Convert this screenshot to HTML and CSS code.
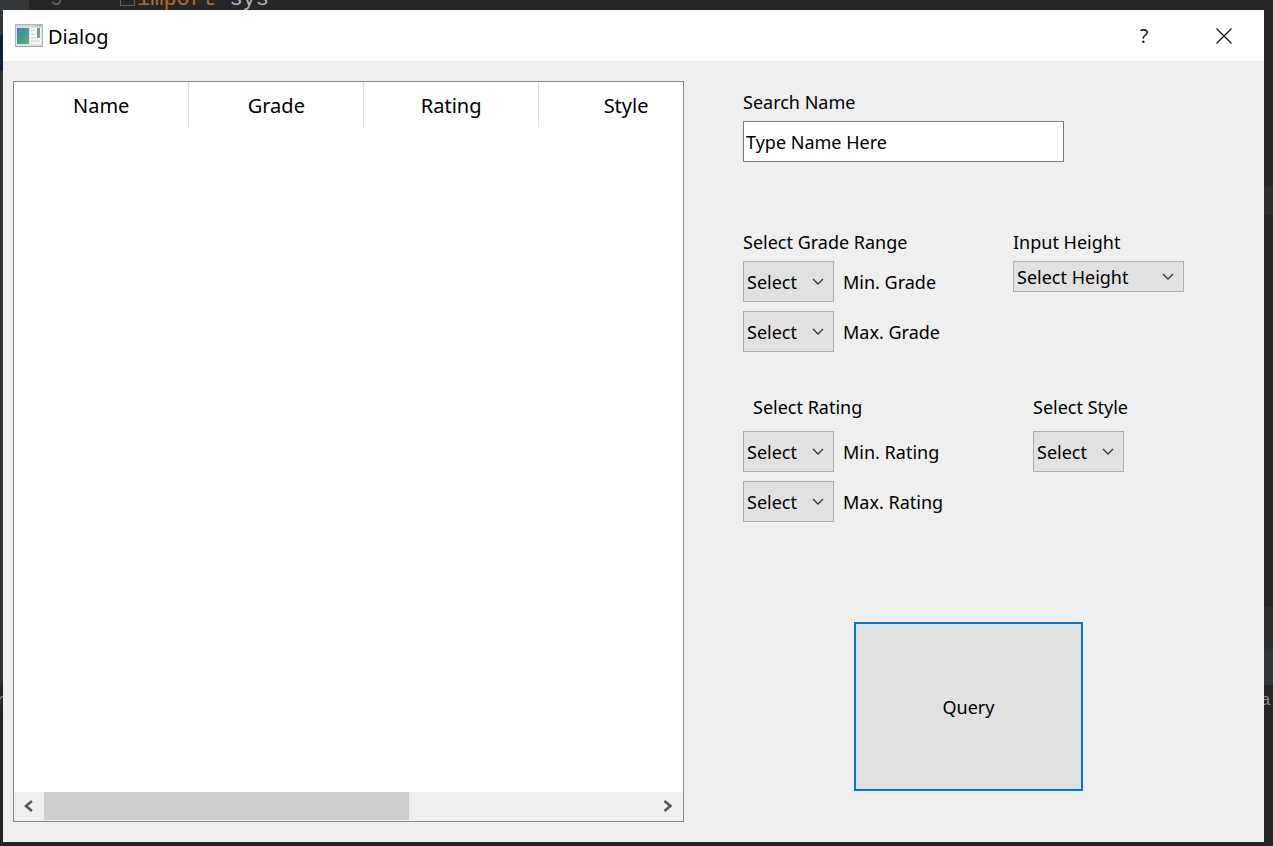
FILE: index.html
```
<!DOCTYPE html>
<html lang="en">
<head>
<meta charset="utf-8">
<title>Dialog</title>
<link rel="stylesheet" href="styles.css">
</head>
<body>
<div class="editor" aria-hidden="true">
  <div class="gutter"><span class="line-number">9</span></div>
  <span class="fold"></span>
  <code class="code-line"><span class="keyword">import</span> sys</code>
  <div class="caret-line"></div>
  <div class="band band-upper"></div>
  <div class="band band-tabs"></div>
  <code class="output output-left">r</code>
  <code class="output output-right">a.</code>
</div>
<main class="dialog">
  <header class="titlebar">
    <svg class="app-icon" width="28" height="24" viewBox="0 0 28 24">
      <defs>
        <linearGradient id="pane" x1="0" y1="0" x2="1" y2="1">
          <stop offset="0" stop-color="#4a86b4"/><stop offset="0.5" stop-color="#43998c"/><stop offset="1" stop-color="#62bd68"/>
        </linearGradient>
        <linearGradient id="side" x1="0" y1="0" x2="0" y2="1">
          <stop offset="0" stop-color="#6590b0"/><stop offset="1" stop-color="#62b57b"/>
        </linearGradient>
      </defs>
      <rect x="0.5" y="0.5" width="27" height="22" fill="#e0e3e6" stroke="#b0b4ba"/>
      <path d="M1 2h26" stroke="#d0d3d8" stroke-width="2"/>
      <path d="M20 2h1M22 2h1M24 2h2" stroke="#9a9fa6"/>
      <rect x="2" y="4" width="12" height="16" fill="url(#pane)"/>
      <rect x="15" y="4" width="11" height="16" fill="#f8f8f8"/>
      <path d="M16 6h4M16 10h4M16 14h5M16 17h9" stroke="#c6cad0"/>
      <rect x="22" y="4" width="3" height="10" fill="url(#side)"/>
      <path d="M1 22.500h26" stroke="#a6a6aa"/>
    </svg>
    <h1 class="title">Dialog</h1>
    <button class="window-button" type="button" aria-label="Help">?</button>
    <button class="window-button" type="button" aria-label="Close">
      <svg width="16" height="16" viewBox="0 0 16 16"><path d="M0.500 0.500l15 15M15.500 0.500l-15 15" stroke="#111" stroke-width="1.200"/></svg>
    </button>
  </header>
  <div class="content">
    <section class="results">
      <div class="viewport">
        <table class="grid">
          <thead><tr><th>Name</th><th>Grade</th><th>Rating</th><th>Style</th></tr></thead>
        </table>
      </div>
      <div class="scrollbar">
        <button class="scroll-button" type="button" aria-label="Scroll left"><svg width="10" height="12" viewBox="0 0 10 12"><path d="M8 1L2 6l6 5" fill="none" stroke="#555" stroke-width="2.500"/></svg></button>
        <div class="track"><div class="thumb"></div></div>
        <button class="scroll-button" type="button" aria-label="Scroll right"><svg width="10" height="12" viewBox="0 0 10 12"><path d="M1.500 1L7.500 6l-6 5" fill="none" stroke="#555" stroke-width="2.500"/></svg></button>
      </div>
    </section>
    <form class="filters">
      <div class="search">
        <label for="name">Search Name</label>
        <input id="name" class="text-box" type="text" value="Type Name Here">
      </div>
      <div class="row row-grade">
        <div class="group">
          <div class="heading">Select Grade Range</div>
          <div class="option">
            <span class="combo"><select id="min-grade"><option>Select</option></select><svg class="chevron" width="12" height="7" viewBox="0 0 12 7"><path d="M1 1l5 5 5-5"/></svg></span>
            <label for="min-grade">Min. Grade</label>
          </div>
          <div class="option">
            <span class="combo"><select id="max-grade"><option>Select</option></select><svg class="chevron" width="12" height="7" viewBox="0 0 12 7"><path d="M1 1l5 5 5-5"/></svg></span>
            <label for="max-grade">Max. Grade</label>
          </div>
        </div>
        <div class="group">
          <label for="height">Input Height</label>
          <span class="combo combo-wide"><select id="height"><option>Select Height</option></select><svg class="chevron" width="12" height="7" viewBox="0 0 12 7"><path d="M1 1l5 5 5-5"/></svg></span>
        </div>
      </div>
      <div class="row row-rating">
        <div class="group">
          <div class="heading heading-inset">Select Rating</div>
          <div class="option">
            <span class="combo"><select id="min-rating"><option>Select</option></select><svg class="chevron" width="12" height="7" viewBox="0 0 12 7"><path d="M1 1l5 5 5-5"/></svg></span>
            <label for="min-rating">Min. Rating</label>
          </div>
          <div class="option">
            <span class="combo"><select id="max-rating"><option>Select</option></select><svg class="chevron" width="12" height="7" viewBox="0 0 12 7"><path d="M1 1l5 5 5-5"/></svg></span>
            <label for="max-rating">Max. Rating</label>
          </div>
        </div>
        <div class="group group-style">
          <label for="style">Select Style</label>
          <span class="combo"><select id="style"><option>Select</option></select><svg class="chevron" width="12" height="7" viewBox="0 0 12 7"><path d="M1 1l5 5 5-5"/></svg></span>
        </div>
      </div>
      <button class="query" type="button">Query</button>
    </form>
  </div>
</main>
</body>
</html>
```
FILE: styles.css
```
* {
  box-sizing: border-box;
}

body {
  margin: 0;
  min-height: 100vh;
  padding: 10px 9px 4px 3px;
  display: flex;
  position: relative;
  overflow: hidden;
  background: #262626;
  color: #000;
  font: 18px/24px "Noto Sans", sans-serif;
}

/* Code editor behind the dialog */
.editor {
  position: absolute;
  inset: 0;
  overflow: hidden;
  font: 22px/24px "Liberation Mono", monospace;
  color: #a9b7c6;
}

.editor code {
  font: inherit;
}

.gutter {
  position: absolute;
  left: 0;
  top: 0;
  width: 29px;
  height: 100%;
  background: linear-gradient(#34373a 0 35px, #0d2238 35px 71px, #303030 71px 685px, #242424 685px);
}

.line-number {
  position: absolute;
  left: 50px;
  top: -12px;
  color: #606366;
}

.fold {
  position: absolute;
  left: 120px;
  top: -9px;
  width: 15px;
  height: 15px;
  border: 1px solid #606366;
}

.code-line {
  position: absolute;
  left: 137px;
  top: -12px;
  white-space: pre;
}

.keyword {
  color: #b06a2e;
}

.caret-line,
.band {
  position: absolute;
  right: 0;
  width: 20px;
}

.caret-line {
  top: 186px;
  height: 29px;
  background: #2e2e2e;
}

.band-upper {
  top: 607px;
  height: 42px;
  background: #2d2f31;
}

.band-tabs {
  top: 649px;
  height: 36px;
  background: #303538;
}

.editor .output {
  position: absolute;
  top: 689px;
  color: #8a8a8a;
  font-size: 17px;
}

.output-left {
  left: -4px;
}

.output-right {
  right: -8px;
}

/* Dialog window */
.dialog {
  position: relative;
  flex: 1;
  display: flex;
  flex-direction: column;
  background: #efefef;
}

.titlebar {
  display: flex;
  align-items: center;
  height: 51px;
  padding-left: 12px;
  background: #fff;
}

.title {
  flex: 1;
  margin: 0 0 0 5px;
  padding-top: 2px;
  font: 20px/28px "Noto Sans", sans-serif;
}

.window-button {
  width: 80px;
  height: 51px;
  padding: 0;
  border: 0;
  background: none;
  color: #111;
  display: flex;
  align-items: center;
  justify-content: center;
  font: 20px/28px "Open Sans", sans-serif;
}

.content {
  flex: 1;
  display: grid;
  grid-template-columns: minmax(0, 671fr) minmax(450px, 511fr);
  gap: 59px;
  padding: 20px 10px;
}

/* Result table */
.results {
  display: flex;
  flex-direction: column;
  border: 1px solid #828790;
  background: #fff;
}

.viewport {
  flex: 1;
  overflow: hidden;
}

.grid {
  width: 700px;
  table-layout: fixed;
  border-collapse: collapse;
}

.grid th {
  height: 45px;
  padding: 2px 0 0;
  border-right: 1px solid #e0e0e0;
  font: 20px/28px "Noto Sans", sans-serif;
}

.scrollbar {
  display: flex;
  height: 29px;
  padding-bottom: 1px;
  background: #efefef;
}

.scroll-button {
  width: 30px;
  padding: 0;
  border: 0;
  background: none;
  display: flex;
  align-items: center;
  justify-content: center;
}

.track {
  flex: 1;
}

.thumb {
  width: 60%;
  height: 100%;
  background: #cdcdcd;
}

/* Filters */
.filters {
  padding-top: 9px;
}

.search {
  display: flex;
  flex-direction: column;
  align-items: flex-start;
  gap: 7px;
}

.text-box {
  width: 321px;
  height: 41px;
  padding: 0 2px;
  border: 1px solid #7a7a7a;
  background: #fff;
  color: #000;
  font: inherit;
}

.row {
  display: grid;
  grid-template-columns: 270px 1fr;
}

.row-grade {
  margin-top: 68px;
}

.row-rating {
  margin-top: 43px;
}

.group {
  display: flex;
  flex-direction: column;
  align-items: flex-start;
  gap: 9px;
}

.row-grade .group > :first-child {
  margin-bottom: -2px;
}

.row-rating .group > :first-child {
  margin-bottom: 3px;
}

.heading-inset {
  padding-left: 10px;
}

.group-style {
  padding-left: 20px;
}

.option {
  display: flex;
  align-items: center;
  gap: 9px;
}

.combo {
  position: relative;
  display: flex;
  width: 91px;
  height: 41px;
}

.combo-wide {
  width: 171px;
  height: 31px;
}

.combo select {
  appearance: none;
  width: 100%;
  height: 100%;
  padding: 0 3px;
  border: 1px solid #adadad;
  border-radius: 0;
  background: #e1e1e1;
  color: #000;
  font: inherit;
}

.chevron {
  position: absolute;
  right: 10px;
  top: calc(50% - 4px);
  fill: none;
  stroke: #333;
  stroke-width: 1.3;
  pointer-events: none;
}

.query {
  display: block;
  width: 229px;
  height: 169px;
  margin: 100px 0 0 111px;
  border: 2px solid #0078d7;
  background: #e1e1e1;
  color: #000;
  font: inherit;
}
```
